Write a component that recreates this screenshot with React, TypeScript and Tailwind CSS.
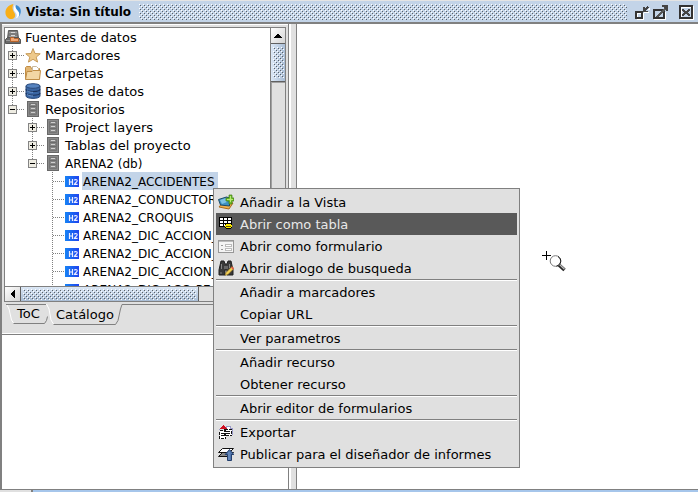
import React from "react";

const iconClass = "block h-4 w-4 shrink-0";

function Bumps({ id, className }: { id: string; className: string }) {
  return (
    <svg className={className} aria-hidden="true" shapeRendering="crispEdges">
      <defs>
        <pattern id={id} width="4" height="4" patternUnits="userSpaceOnUse">
          <path fill="#fff" d="M0 0h1v1H0zM2 2h1v1H2z" />
          <path fill="#5a6068" d="M1 1h1v1H1zM3 3h1v1H3z" />
        </pattern>
      </defs>
      <rect width="100%" height="100%" fill={`url(#${id})`} />
    </svg>
  );
}

function SourcesIcon() {
  return (
    <svg className={iconClass} viewBox="0 0 16 16">
      <path d="M3.500 1.500h9l1 8h-11z" fill="#7c7c7c" stroke="#5a5a5a" />
      <path d="M4 3.500h8M4 7.500h8" stroke="#9d9d9d" />
      <path d="M6 3.500h4M6 6.500h4" stroke="#d8d8d8" />
      <path d="M0.500 10.500l2-2h11l2 2v4H.5z" fill="#6a6a6a" stroke="#555" />
      <path d="M1 11.500h14" stroke="#999" />
      <path d="M5.500 8.500h3l1 1h4v3h-8z" fill="#efa673" stroke="#b5622a" />
    </svg>
  );
}

function StarIcon() {
  return (
    <svg className={iconClass} viewBox="0 0 16 16">
      <path
        d="M8 1.500l2 5 5.200.3-4 3.300 1.400 5L8 12.300l-4.600 2.800 1.400-5-4-3.300L6 6.500z"
        fill="#eec98a"
        stroke="#c69a58"
        strokeLinejoin="round"
      />
    </svg>
  );
}

function FolderIcon() {
  return (
    <svg className={iconClass} viewBox="0 0 16 16">
      <path d="M.5 14V2.500l1-1h4l1 2h8V14z" fill="#e2b673" stroke="#c08d45" />
      <path d="M7.500 1.500h4l2 2v5h-6z" fill="#fff" stroke="#c9b99c" />
      <path d="M.5 14.500l1.500-8h5l1-1h7.500l-1 9z" fill="#f3d7a4" stroke="#c08d45" />
    </svg>
  );
}

function DatabaseIcon() {
  return (
    <svg className={iconClass} viewBox="0 0 16 16">
      <path d="M1 3v10c0 3.200 14 3.200 14 0V3z" fill="#3b66a3" stroke="#2b4b7c" />
      <ellipse cx="8" cy="3" rx="7" ry="2.300" fill="#5583c0" stroke="#2b4b7c" />
      <path d="M1 6.300c0 3 14 3 14 0M1 10c0 3 14 3 14 0" fill="none" stroke="#1b335c" strokeWidth="1.100" />
      <path d="M2 7.800c2 1.300 4 1.500 6 1.500M2 11.500c2 1.300 4 1.500 6 1.500" fill="none" stroke="#6c97cf" />
    </svg>
  );
}

function CabinetIcon() {
  return (
    <svg className={iconClass} viewBox="0 0 16 16">
      <rect x="2.500" y="0.500" width="11" height="15" fill="#8a8a8a" stroke="#686868" />
      <path d="M4.500 2.500h7v11h-7z" fill="#858585" stroke="#747474" />
      <path d="M5 5.500h6M5 9.500h6" stroke="#6c6c6c" />
      <path d="M6 3.500h4M6 7.500h4M6 11.500h4" stroke="#cfcfcf" />
    </svg>
  );
}

function H2Icon() {
  return (
    <svg className="block h-3 w-3.5 shrink-0" viewBox="0 0 14 12">
      <defs>
        <linearGradient id="h2fill">
          <stop offset="0" stopColor="#1683f5" />
          <stop offset="1" stopColor="#1f43ee" />
        </linearGradient>
      </defs>
      <rect y="1" width="14" height="11" fill="url(#h2fill)" />
      <path d="M4.500 4v6M7.500 4v6M4 7h4" stroke="#eef" strokeWidth="1.200" />
      <path d="M9.300 5.300c.3-1 3-1 2.900.4 0 1.300-2 2-2.800 3.700h3.200" fill="none" stroke="#eef" strokeWidth="1.100" />
    </svg>
  );
}

type Node = {
  label: string;
  depth: number;
  icon: () => React.JSX.Element;
  state?: "open" | "closed";
  last?: boolean;
  selected?: boolean;
  small?: boolean;
};

const nodes: Node[] = [
  { label: "Fuentes de datos", depth: 0, icon: SourcesIcon },
  { label: "Marcadores", depth: 1, icon: StarIcon, state: "closed" },
  { label: "Carpetas", depth: 1, icon: FolderIcon, state: "closed" },
  { label: "Bases de datos", depth: 1, icon: DatabaseIcon, state: "closed" },
  { label: "Repositorios", depth: 1, icon: CabinetIcon, state: "open", last: true },
  { label: "Project layers", depth: 2, icon: CabinetIcon, state: "closed" },
  { label: "Tablas del proyecto", depth: 2, icon: CabinetIcon, state: "closed" },
  { label: "ARENA2 (db)", depth: 2, icon: CabinetIcon, state: "open", last: true, small: true },
  { label: "ARENA2_ACCIDENTES", depth: 3, icon: H2Icon, selected: true, small: true },
  { label: "ARENA2_CONDUCTORES", depth: 3, icon: H2Icon, small: true },
  { label: "ARENA2_CROQUIS", depth: 3, icon: H2Icon, small: true },
  { label: "ARENA2_DIC_ACCION_", depth: 3, icon: H2Icon, small: true },
  { label: "ARENA2_DIC_ACCION_", depth: 3, icon: H2Icon, small: true },
  { label: "ARENA2_DIC_ACCION_", depth: 3, icon: H2Icon, small: true },
  { label: "ARENA2_DIC_ACC_PE", depth: 3, icon: H2Icon, small: true },
];

function Guide({ state, last }: { state?: "open" | "closed"; last?: boolean }) {
  return (
    <svg className="block h-[18px] w-5 shrink-0" viewBox="0 0 20 18" shapeRendering="crispEdges" aria-hidden="true">
      <path d={last ? "M7.500 0V9" : "M7.500 0V18"} stroke="#808080" strokeDasharray="1 1" />
      <path d="M8 9.500H19" stroke="#808080" strokeDasharray="1 1" />
      {state && (
        <>
          <rect x="3.500" y="5.500" width="8" height="8" fill="#eeece2" stroke="#848484" />
          <path d="M5 9.500h5" stroke="#000" />
          {state === "closed" && <path d="M7.500 7v5" stroke="#000" />}
        </>
      )}
    </svg>
  );
}

function TreeRow({ node }: { node: Node }) {
  const Icon = node.icon;
  return (
    <li role="treeitem" aria-selected={!!node.selected} className="flex h-[18px] items-center whitespace-nowrap">
      {node.depth > 1 && <span className="w-5 shrink-0" />}
      {node.depth > 2 && <span className="w-5 shrink-0" />}
      {node.depth > 0 && <Guide state={node.state} last={node.last} />}
      <Icon />
      <span
        className={`ml-[3px] h-[18px] pr-[3px] pl-px ${node.small ? "text-xs/5" : "text-[13px]/5"} ${
          node.selected ? "bg-[#c3d4e8]" : ""
        }`}
      >
        {node.label}
      </span>
    </li>
  );
}

function AddLayerIcon() {
  return (
    <svg className={iconClass} viewBox="0 0 16 16">
      <path d="M1 13l10 2 4-6-9-2z" fill="#f0b04c" stroke="#a86a1c" />
      <path d="M0.500 5.500l8-2.500 3 1v8l-9-1z" fill="#3c91c4" stroke="#1c4965" />
      <path d="M2 6l6-2 1 4-5 2z" fill="#7bc1e4" />
      <path d="M11 1h3v3h2v3h-2v3h-3V7H8V4h3z" fill="#73bf2c" stroke="#3c7d12" strokeWidth=".7" />
      <path d="M12.500 2v6M9 5.500h6" stroke="#b6ea76" />
    </svg>
  );
}

function TableIcon() {
  return (
    <svg className={iconClass} viewBox="0 0 16 16" shapeRendering="crispEdges">
      <path d="M1 1h13v10H1z" fill="#000" />
      <path d="M2 2h3v2H2zM6 2h3v2H6zM10 2h3v2h-3zM2 5h3v2H2zM6 5h3v2H6zM10 5h3v2h-3zM2 8h3v2H2zM6 8h3v2H6z" fill="#fff" />
      <path d="M8 7h5v1h1v4h-1v1H8v-1H7V8h1z" fill="#000" />
      <path d="M8 8h5v1h1v2h-1v1H8v-1H7V9h1z" fill="#ffed00" />
      <path d="M8 10h5v1H8z" fill="#5a5200" />
    </svg>
  );
}

function FormIcon() {
  return (
    <svg className={iconClass} viewBox="0 0 16 16" shapeRendering="crispEdges">
      <rect x="0.500" y="2.500" width="15" height="12" fill="#f4f4f4" stroke="#979797" />
      <path d="M1 3.500h14" stroke="#bbb" />
      <path d="M3 7.500h2M3 11.500h2" stroke="#999" />
      <path d="M7.500 6.500h6v2h-6zM7.500 10.500h6v2h-6z" fill="#fff" stroke="#bbb" />
    </svg>
  );
}

function BinocularsIcon() {
  return (
    <svg className={iconClass} viewBox="0 0 16 16">
      <path d="M3 1h3l1 3h2l1-3h3l2 9v5H9v-5H7v5H1v-5z" fill="#393939" stroke="#202020" />
      <path d="M3.500 4v5M11.500 4v4M3 12v2" stroke="#858585" />
      <path d="M6 6h4v3H6z" fill="#666" />
      <path d="M7 15.500l1-3 6-6 2 2-6 6z" fill="#f2cf55" stroke="#81651c" strokeWidth=".6" />
      <path d="M13 7.500l1-1 2 2-1 1z" fill="#e34c4c" />
    </svg>
  );
}

function ExportIcon() {
  return (
    <svg className={iconClass} viewBox="0 0 16 16" shapeRendering="crispEdges">
      <path d="M8.500 2.500h4v2h2v6h-6z" fill="#fff" stroke="#9a9ac8" />
      <path d="M1.500 6.500h6v8h-6zM6.500 5.500h7v6h-7z" fill="#fff" stroke="#111" strokeDasharray="3 1" />
      <path d="M3 9.500h3M3 11.500h3M8 7.500h4M8 9.500h4" stroke="#111" />
      <path d="M5 1h1v1h1v1h1v1h1v1H2V4h1V3h1V2h1z" fill="#d01020" />
      <path d="M1 5h1v1H1zM14 5h1v6h-1z" fill="#9a9ac8" />
    </svg>
  );
}

function PublishIcon() {
  return (
    <svg className={iconClass} viewBox="0 0 16 16">
      <path d="M0.500 10.500l4-4h11l-4 4z" fill="#8b8b8b" stroke="#111" />
      <path d="M0.500 6.500l4-4h11l-4 4z" fill="#fff" stroke="#111" />
      <path d="M11.500 3.500l4.300 5h-2.300v6h-4v-6H7.200z" fill="#5076ae" stroke="#233e6c" />
      <path d="M11 6v8" stroke="#7697c5" />
    </svg>
  );
}

type Item = { label: string; icon?: () => React.JSX.Element; active?: boolean };

const groups: Item[][] = [
  [
    { label: "Añadir a la Vista", icon: AddLayerIcon },
    { label: "Abrir como tabla", icon: TableIcon, active: true },
    { label: "Abrir como formulario", icon: FormIcon },
    { label: "Abrir dialogo de busqueda", icon: BinocularsIcon },
  ],
  [{ label: "Añadir a marcadores" }, { label: "Copiar URL" }],
  [{ label: "Ver parametros" }],
  [{ label: "Añadir recurso" }, { label: "Obtener recurso" }],
  [{ label: "Abrir editor de formularios" }],
  [
    { label: "Exportar", icon: ExportIcon },
    { label: "Publicar para el diseñador de informes", icon: PublishIcon },
  ],
];

function ContextMenu() {
  return (
    <div role="menu" className="absolute top-[188px] left-[213px] w-[307px] border border-[#808080] bg-[#e0e0e0] p-0.5">
      {groups.map((items, g) => (
        <div key={g} role="group" className={g > 0 ? "border-t border-[#808080]" : ""}>
          <div className={g > 0 ? "border-t border-white" : ""}>
            {items.map(({ label, icon: Icon, active }) => (
              <button
                key={label}
                role="menuitem"
                className={`flex h-[22px] w-full items-center gap-1.5 px-0.5 text-left whitespace-nowrap ${
                  active ? "bg-[#595959] text-[#e8e8e8]" : ""
                }`}
              >
                {Icon ? <Icon /> : <span className="w-4 shrink-0" />}
                <span className="pt-0.5">{label}</span>
              </button>
            ))}
          </div>
        </div>
      ))}
    </div>
  );
}

function TitleBar() {
  return (
    <header className="flex h-6 shrink-0 items-center border-t border-b-2 border-t-[#e4e4e4] border-b-[#808080] bg-[#c3d4e8] pr-1 pl-[5px]">
      <svg className="block h-4 w-4 shrink-0" viewBox="0 0 16 16">
        <path d="M8.500 0C3 1 0 5 .5 9.500 1 13 4 15.500 7 15c3-.5 4-3.500 2.500-6C8 6.500 6.500 4 8.500 0z" fill="#f9ae16" />
        <path d="M10 1C8 4 8.500 6 10.500 8.500c2 2.500 1.500 5-.5 6.500 4-1.500 5.500-5 4-7.500C12.500 5 10.500 4 10 1z" fill="#fff" />
        <path d="M11 1c-1 2.500 0 4 2 6 1.800 2 1.500 4 .5 6C16 10 16.500 6.500 15 4c-1-1.700-2.500-2.500-4-3z" fill="#3a8bd3" />
      </svg>
      <h1 className="ml-[5px] text-xs font-bold whitespace-nowrap">Vista: Sin título</h1>
      <Bumps id="title-bumps" className="mr-[5px] ml-2 block h-4 min-w-0 flex-1" />
      <button aria-label="Minimizar" className="ml-0.5">
        <svg className={iconClass} viewBox="0 0 16 16" shapeRendering="crispEdges">
          <path d="M3 9h6v6H3z" fill="none" stroke="#fff" />
          <path d="M2 8h6v6H2z" fill="none" stroke="#333" strokeWidth="2" />
          <path d="M9 3v5h5V7h-2V6h1V5h1V4h1V3h-1V2h-1v1h-1v1h-1V3z" fill="#444" />
          <path d="M10 8h5M14 5h1v-1h1" fill="none" stroke="#fff" />
        </svg>
      </button>
      <button aria-label="Maximizar" className="ml-0.5">
        <svg className={iconClass} viewBox="0 0 16 16" shapeRendering="crispEdges">
          <path d="M13.500 8v7.500H2" fill="none" stroke="#fff" />
          <path d="M2 6h10v8H2z" fill="none" stroke="#333" strokeWidth="2" />
          <path d="M4 12h1v-1h1v-1h1V9h1V8h1V7h1V6h1V5h1V4h2v2h-1v1h-1v1h-1v1h-1v1H9v1H8v1H7v1H4z" fill="#555" />
          <path d="M10 1h6v6h-2V5h-1V4h-1V3h-2z" fill="#444" />
        </svg>
      </button>
      <button aria-label="Cerrar" className="ml-2.5">
        <svg className={iconClass} viewBox="0 0 16 16" shapeRendering="crispEdges">
          <path d="M3 3h11v11H3zM15.500 2v13.500H2" fill="none" stroke="#fff" />
          <path d="M2 2h12v12H2z" fill="none" stroke="#333" strokeWidth="2" />
          <path d="M4 5h2v1h1v1h2V6h1V5h2v2h-1v1h-1v1h1v1h1v2h-2v-1H9v-1H7v1H6v1H4v-2h1V9h1V8H5V7H4z" fill="#444" />
        </svg>
      </button>
    </header>
  );
}

function VerticalScrollbar() {
  return (
    <div className="flex w-[15px] shrink-0 flex-col border-l border-[#808080] bg-[#e0e0e0]">
      <button aria-label="Subir" className="flex h-[15px] shrink-0 items-center justify-center bg-linear-to-br from-white to-[#d4d4d4]">
        <svg className="block h-1 w-2" viewBox="0 0 8 4" shapeRendering="crispEdges">
          <path d="M3 0h2v1h1v1h1v1h1v1H0V3h1V2h1V1h1z" />
        </svg>
      </button>
      <div className="flex h-[39px] shrink-0 border-y border-[#606060] bg-linear-to-r from-[#dce8f6] to-[#a9bdd5] py-[3px] pl-0.5">
        <Bumps id="vertical-bumps" className="block h-full w-[11px]" />
      </div>
      <div className="flex-1 border-t border-l border-[#a0a0a0]" />
    </div>
  );
}

function HorizontalScrollbar() {
  return (
    <div className="flex h-4 shrink-0 border-y border-[#808080] bg-[#e0e0e0]">
      <button aria-label="Izquierda" className="flex w-[15px] shrink-0 items-center justify-center bg-linear-to-br from-white to-[#d4d4d4]">
        <svg className="block h-2 w-1" viewBox="0 0 4 8" shapeRendering="crispEdges">
          <path d="M0 3h1V2h1V1h1V0h1v8H3V7H2V6H1V5H0z" />
        </svg>
      </button>
      <div className="flex w-[179px] shrink-0 items-center border-x border-[#606060] bg-linear-to-b from-[#dce8f6] to-[#a9bdd5] px-0.5">
        <Bumps id="horizontal-bumps" className="block h-[11px] w-full" />
      </div>
    </div>
  );
}

function Tabs() {
  return (
    <div role="tablist" className="flex h-[30px] shrink-0 border-b border-white pl-1">
      <button role="tab" aria-selected="false" className="relative h-5 w-10 shrink-0">
        <svg className="absolute inset-0 h-5 w-11" viewBox="0 0 44 20" aria-hidden="true">
          <path d="M0 .5h40" stroke="#808080" />
          <path d="M1 1l2 4 2.500 11 2 3" fill="none" stroke="#fff" />
          <path d="M7.500 19.500h31l2-3 1-4" fill="none" stroke="#808080" />
        </svg>
        <span className="absolute inset-0 pl-[11px] text-left leading-5">ToC</span>
      </button>
      <button role="tab" aria-selected="true" className="relative h-[21px] w-[77px] shrink-0">
        <svg className="absolute inset-0 h-[21px] w-[77px]" viewBox="0 0 77 21" aria-hidden="true">
          <path d="M0 0l3 5 2 11 2.500 4h62l2.500-4L74 5l3-5z" fill="#e0e0e0" />
          <path d="M.5 0l2.500 5 2 11 2.500 4" fill="none" stroke="#fff" />
          <path d="M7.500 20.500h62l2.500-4L74.500 5l1.500-4.500h1" fill="none" stroke="#808080" />
        </svg>
        <span className="absolute inset-0 pl-[10px] text-left leading-[22px]">Catálogo</span>
      </button>
      <span className="h-px flex-1 bg-[#808080]" />
    </div>
  );
}

function ZoomCursor() {
  return (
    <svg className="absolute top-[250px] left-[541px] h-[22px] w-[26px]" viewBox="0 0 26 22" aria-hidden="true">
      <path d="M1 5.500h9M5.500 1v9" stroke="#000" shapeRendering="crispEdges" />
      <path d="M18 15l5.500 5" stroke="#222" strokeWidth="3.500" />
      <path d="M18.500 14.500l5 4.800" stroke="#bbb" strokeWidth="1.300" />
      <circle cx="14.500" cy="11" r="5.300" fill="#fff" stroke="#777" />
      <path d="M17 6.500c4 2.500 3.500 8-1.500 9.700" fill="none" stroke="#111" />
    </svg>
  );
}

export default function App() {
  return (
    <div className="relative flex h-screen flex-col overflow-hidden bg-[#e0e0e0] font-['DejaVu_Sans',sans-serif] text-[13px] leading-[18px] text-black">
      <TitleBar />
      <main className="flex min-h-0 flex-1 border-l-2 border-[#808080]">
        <aside className="flex w-[287px] shrink-0 flex-col border-r border-[#808080]">
          <section className="flex h-[278px] shrink-0 flex-col border-t border-white pt-0.5 pr-0.5 pl-0.5">
            <div className="flex min-h-0 flex-1 flex-col border-t border-r border-l border-[#808080] bg-white">
              <div className="flex min-h-0 flex-1">
                <ul role="tree" aria-label="Fuentes de datos" className="min-w-0 flex-1 overflow-hidden">
                  {nodes.map((node, i) => (
                    <TreeRow key={i} node={node} />
                  ))}
                </ul>
                <VerticalScrollbar />
              </div>
              <HorizontalScrollbar />
            </div>
          </section>
          <div className="h-0.5 shrink-0" />
          <Tabs />
          <section className="flex min-h-0 flex-1 flex-col bg-[#e0e0e0]">
            <div className="min-h-0 flex-1 border-t border-[#808080] bg-white" />
          </section>
        </aside>
        <div className="w-[7px] shrink-0 border-l-2 border-white bg-[#e0e0e0]" />
        <section aria-label="Mapa" className="flex-1 border-l border-[#808080] bg-white" />
      </main>
      <footer className="flex h-[3px] shrink-0 border-t border-[#808080] bg-[#a6c6eb]">
        <div className="w-[33px] border-r-2 border-[#808080] bg-[#e0e0e0]" />
      </footer>
      <ContextMenu />
      <ZoomCursor />
    </div>
  );
}
